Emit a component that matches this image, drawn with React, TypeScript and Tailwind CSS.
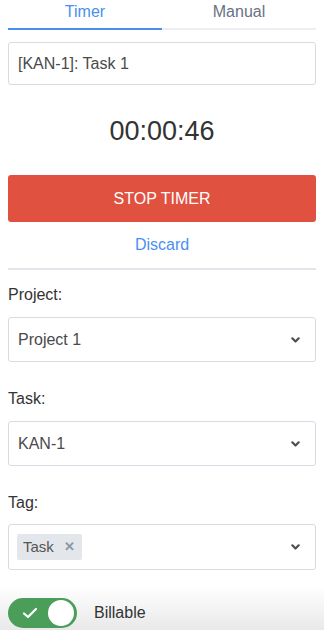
import { useState } from 'react'

function Chevron() {
  return (
    <svg width="9" height="6" viewBox="0 0 9 6" className="shrink-0">
      <path d="M1.3 1.3 L4.5 4.5 L7.7 1.3" fill="none" stroke="#4b4f56" strokeWidth="2.2" strokeLinecap="round" strokeLinejoin="round" />
    </svg>
  )
}

function SelectBox({ children }: { children: React.ReactNode }) {
  return (
    <div className="flex h-[45px] items-center justify-between rounded-[3px] border border-[#d6dce3] bg-white pl-[9px] pr-[15px]">
      {children}
      <Chevron />
    </div>
  )
}

export default function App() {
  const [tab, setTab] = useState<'timer' | 'manual'>('timer')
  const [billable, setBillable] = useState(true)

  return (
    <div className="flex h-[630px] w-[324px] flex-col overflow-hidden bg-white font-['Liberation_Sans',Arial,sans-serif] text-[16px] text-[#333]">
      <div className="px-2">
        {/* tabs */}
        <div className="flex">
          <button
            onClick={() => setTab('timer')}
            className={`h-[30px] flex-1 border-b-2 pb-[4px] ${tab === 'timer' ? 'border-[#4a8ff0] text-[#4a8ff0]' : 'border-[#eceef1] text-[#6a7282]'}`}
          >
            Timer
          </button>
          <button
            onClick={() => setTab('manual')}
            className={`h-[30px] flex-1 border-b-2 pb-[4px] ${tab === 'manual' ? 'border-[#4a8ff0] text-[#4a8ff0]' : 'border-[#eceef1] text-[#6a7282]'}`}
          >
            Manual
          </button>
        </div>

        <div className="mt-[12px] flex h-[43px] items-center rounded-[3px] border border-[#d6dce3] px-[9px] text-[#4a4a4a]">
          [KAN-1]: Task 1
        </div>

        <div className="mt-[29px] text-center text-[27px] leading-[34px] text-[#333]">00:00:46</div>

        <button className="mt-[27px] flex h-[47px] w-full items-center justify-center rounded-[3px] bg-[#e05140] text-white">
          STOP TIMER
        </button>

        <div className="mt-[13px] text-center leading-[20px] text-[#4a8ff0]">Discard</div>

        <div className="mt-[13px] h-[2px] bg-[#e2e6ea]" />

        <div className="mt-[15px] leading-[20px]">Project:</div>
        <div className="mt-[12px]">
          <SelectBox>
            <span className="text-[#4a4a4a]">Project 1</span>
          </SelectBox>
        </div>

        <div className="mt-[27px] leading-[20px]">Task:</div>
        <div className="mt-[12px]">
          <SelectBox>
            <span className="text-[#4a4a4a]">KAN-1</span>
          </SelectBox>
        </div>

        <div className="mt-[27px] leading-[20px]">Tag:</div>
        <div className="mt-[11px]">
          <div className="flex h-[46px] items-center justify-between rounded-[3px] border border-[#d6dce3] bg-white pl-[8px] pr-[15px]">
            <span className="flex h-[26px] items-center gap-[10px] rounded-[2px] bg-[#e3e6ea] pl-[6px] pr-[7px] text-[15px] text-[#555]">
              Task
              <span className="text-[13px] font-bold text-[#8a97a5]">✕</span>
            </span>
            <Chevron />
          </div>
        </div>
      </div>

      {/* footer */}
      <div className="mt-auto h-[44px] bg-gradient-to-b from-white to-[#e9e9e9] px-2 pt-[12px]">
        <div className="flex items-center gap-[17px]">
          <button
            onClick={() => setBillable(!billable)}
            className={`relative flex h-[30px] w-[69px] items-center rounded-full ${billable ? 'bg-[#4a9e59]' : 'bg-[#c8ccd1]'}`}
          >
            <svg width="16" height="12" viewBox="0 0 16 12" className="ml-[14px]">
              <path d="M2 6.5 L6 10 L14 2" fill="none" stroke="white" strokeWidth="2.2" strokeLinecap="round" strokeLinejoin="round" />
            </svg>
            <span className={`absolute top-[2px] h-[26px] w-[26px] rounded-full bg-white ${billable ? 'right-[3px]' : 'left-[3px]'}`} />
          </button>
          <span className="text-[#333]">Billable</span>
        </div>
      </div>
    </div>
  )
}
